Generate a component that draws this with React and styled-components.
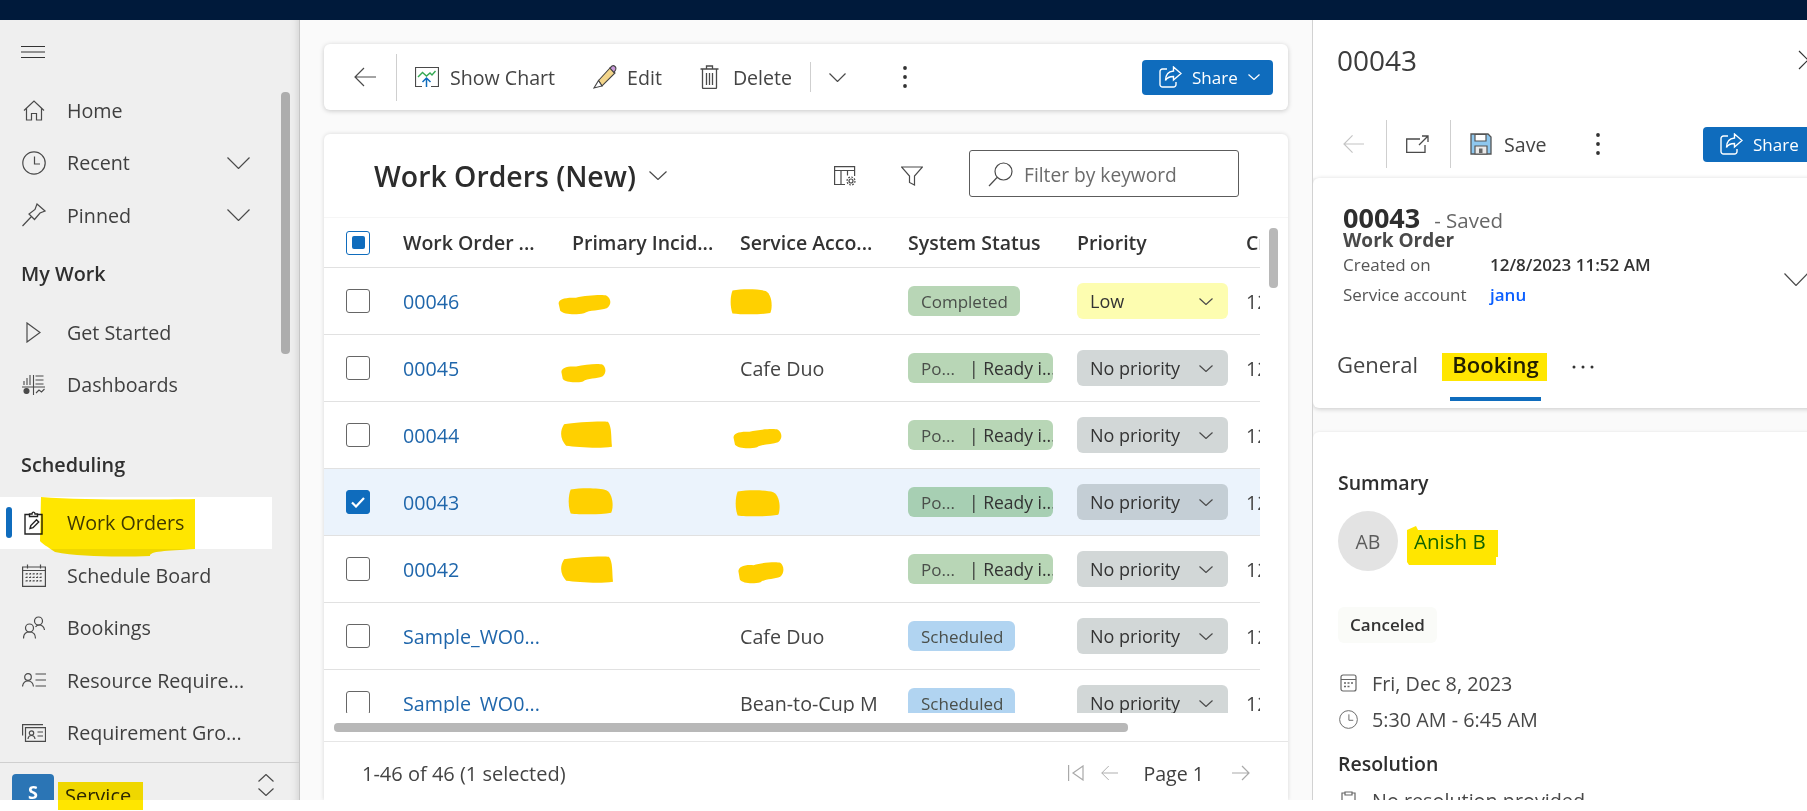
import React from "react";
import styled, { createGlobalStyle } from "styled-components";

const Global = createGlobalStyle`
  html, body { margin: 0; padding: 0; background: #fff; }
  body { font-family: "Open Sans", "Noto Sans", "Liberation Sans", sans-serif; color: #3b3a39; }
  * { box-sizing: border-box; }
`;

const Page = styled.div`
  position: relative;
  width: 1807px;
  height: 811px;
  background: #fff;
  overflow: hidden;
`;
const TopBar = styled.div`height: 20px; background: #001a3b;`;
const Shell = styled.div`display: flex; height: 780px;`;

/* highlighter strokes drawn by the screenshot's author */
const Marker = styled.svg`
  position: absolute;
  left: ${p => p.$x}px;
  top: ${p => p.$y}px;
  width: ${p => p.$w}px;
  height: ${p => p.$h}px;
  mix-blend-mode: multiply;
  pointer-events: none;
  z-index: 5;
`;
const Highlight = ({ x, y, w, h, d }) => (
  <Marker $x={x} $y={y} $w={w} $h={h} viewBox={`0 0 ${w} ${h}`}><path d={d} fill="#ffe600" /></Marker>
);

const Ico = styled.svg`
  flex: none;
  fill: none;
  stroke: ${p => p.$c || "#4a4a4a"};
  stroke-width: ${p => p.$sw || 1.2};
`;

/* ---------- sidebar ---------- */
const Sidebar = styled.aside`
  position: relative;
  flex: none;
  width: 300px;
  background: #efefef;
  border-right: 1px solid #c6c6c6;
  box-shadow: inset -10px 0 9px -9px rgba(0,0,0,.13);
  display: flex;
  flex-direction: column;
`;
const Burger = styled.div`
  height: 62px;
  flex: none;
  display: flex;
  align-items: flex-start;
  padding: 26px 0 0 21px;
`;
const Nav = styled.nav`flex: 1; min-height: 0; overflow: hidden; padding-top: 2px;`;
const NavItem = styled.div`
  position: relative;
  height: 52.5px;
  width: 272px;
  display: flex;
  align-items: center;
  font-size: 19.7px;
  color: #3f3f3f;
  background: ${p => p.$active ? "#fff" : "transparent"};
`;
const NavIcon = styled.span`
  width: 67px;
  flex: none;
  display: flex;
  justify-content: center;
`;
const NavLabel = styled.span`flex: 1; white-space: nowrap;`;
const NavChevron = styled.span`display: flex; padding-right: 22px;`;
const ActiveBar = styled.span`
  position: absolute;
  left: 6px;
  top: 10px;
  width: 6px;
  height: 31px;
  border-radius: 3px;
  background: #0f6cbd;
`;
const NavHeading = styled.div`
  height: 52.5px;
  margin-top: ${p => p.$mt}px;
  margin-bottom: 6px;
  padding-left: 21px;
  display: flex;
  align-items: center;
  font-size: 19.8px;
  font-weight: 600;
  color: #2f2f2f;
`;
const SideThumb = styled.div`
  position: absolute;
  left: 281px;
  top: 72px;
  width: 9px;
  height: 262px;
  border-radius: 4px;
  background: #adadad;
`;
const AreaSwitch = styled.div`
  flex: none;
  height: 38px;
  border-top: 1px solid #cfcfcf;
  overflow: hidden;
  display: flex;
  padding: 11px 0 0 12px;
  font-size: 20px;
  font-weight: 500;
  color: #2b2b2b;
`;
const AreaTile = styled.div`
  width: 42px;
  height: 42px;
  flex: none;
  background: #2b75b5;
  border-radius: 4px;
  color: #fff;
  font-weight: 700;
  font-size: 18px;
  text-align: center;
  line-height: 36px;
`;
const AreaName = styled.span`margin-left: 11px; line-height: 44px;`;
const AreaChevrons = styled.span`
  margin-left: auto;
  padding-right: 25px;
  display: flex;
  flex-direction: column;
  gap: 6px;
`;

/* ---------- main column ---------- */
const Main = styled.main`
  flex: none;
  width: 1012px;
  background: #fafafa;
  padding: 24px 24px 0 24px;
  display: flex;
  flex-direction: column;
  gap: 24px;
  overflow: hidden;
`;
const CommandBar = styled.div`
  flex: none;
  height: 66px;
  background: #fff;
  border-radius: 6px;
  box-shadow: 0 1px 5px rgba(0,0,0,.2);
  display: flex;
  align-items: center;
  padding: 0 15px 0 30px;
`;
const Sep = styled.span`
  flex: none;
  width: 1px;
  height: ${p => p.$h}px;
  margin-left: ${p => p.$ml}px;
  background: #cfcfcf;
`;
const Cmd = styled.div`
  flex: none;
  display: flex;
  align-items: center;
  gap: ${p => p.$gap ?? 11}px;
  margin-left: ${p => p.$ml || 0}px;
  font-size: 19.6px;
  color: #444;
  white-space: nowrap;
`;
const ShareBtn = styled.div`
  flex: none;
  display: flex;
  align-items: center;
  width: ${p => p.$w}px;
  height: 35px;
  margin-left: auto;
  padding-left: 17px;
  gap: 10px;
  background: #0f6cbd;
  border-radius: 4px;
  color: #fff;
  font-size: 17px;
`;
const GridCard = styled.section`
  position: relative;
  flex: 1;
  min-height: 0;
  background: #fff;
  border-radius: 6px 6px 0 0;
  box-shadow: 0 0 4px rgba(0,0,0,.14);
  display: flex;
  flex-direction: column;
`;
const TitleBar = styled.div`
  flex: none;
  height: 84px;
  display: flex;
  align-items: center;
  padding: 0 49px 0 50px;
  border-bottom: 1px solid #f6f6f6;
`;
const ViewTitle = styled.h1`
  margin: 0;
  font-size: 28.4px;
  font-weight: 600;
  color: #2c2c2c;
  white-space: nowrap;
`;
const TitleTools = styled.div`
  margin-left: auto;
  display: flex;
  align-items: center;
  gap: 45px;
`;
const Search = styled.div`
  width: 270px;
  height: 47px;
  margin-left: 1px;
  margin-top: -5px;
  border: 1px solid #5c5c5c;
  border-radius: 3px;
  display: flex;
  align-items: center;
  padding: 2px 0 0 18px;
  gap: 11px;
  font-size: 19.2px;
  color: #6b6b6b;
  white-space: nowrap;
`;
const Viewport = styled.div`width: 936px; overflow: hidden; flex: none;`;
const columns = "79px 169px 168px 168px 169px 169px 169px";
const HeadRow = styled.div`
  display: grid;
  grid-template-columns: ${columns};
  height: 50px;
  align-items: center;
  border-bottom: 1px solid #e1e1e1;
  font-size: 19.5px;
  font-weight: 600;
  color: #333;
  white-space: nowrap;
`;
const Body = styled.div`height: 445px; overflow: hidden;`;
const Row = styled.div`
  position: relative;
  display: grid;
  grid-template-columns: ${columns};
  height: 67px;
  align-items: center;
  border-bottom: 1px solid #e1e1e1;
  background: ${p => p.$sel ? "#ebf3fc" : "#fff"};
  font-size: 19.7px;
  color: #444;
  white-space: nowrap;
`;
const CheckCell = styled.div`padding-left: 22px; display: flex;`;
const Box = styled.span`
  width: 24px;
  height: 24px;
  border-radius: 3px;
  border: 1px solid ${p => p.$on ? "#0f6cbd" : "#666"};
  background: ${p => p.$fill ? "#0f6cbd" : "#fff"};
  display: flex;
  align-items: center;
  justify-content: center;
`;
const BoxDot = styled.span`width: 13px; height: 13px; border-radius: 2px; background: #0f6cbd;`;
const LinkCell = styled.span`color: #1f66ab;`;
const Pill = styled.span`
  display: inline-flex;
  align-items: center;
  height: 30px;
  padding: 0 0 0 13px;
  width: ${p => p.$w}px;
  border-radius: 6px;
  font-size: 17px;
  color: #4a4f4a;
  background: ${p => p.$bg};
  overflow: hidden;
`;
const PillHead = styled.span`width: 48px; flex: none;`;
const PillTail = styled.span`color: #333; font-weight: 500; font-size: 17.5px;`;
const PillCell = styled.div`display: flex;`;
const Priority = styled.div`
  width: 151px;
  height: 36px;
  border-radius: 6px;
  background: ${p => p.$bg};
  display: flex;
  align-items: center;
  justify-content: space-between;
  padding: 0 15px 0 13px;
  font-size: 18px;
  font-weight: 500;
  color: #333;
`;
const Blob = styled.svg`
  position: absolute;
  left: ${p => p.$x}px;
  top: ${p => p.$y}px;
  width: ${p => p.$w}px;
  height: ${p => p.$h}px;
  fill: #ffd000;
`;
const VThumb = styled.div`
  position: absolute;
  left: 945px;
  top: 94px;
  width: 9px;
  height: 60px;
  border-radius: 4px;
  background: #b8b8b8;
`;
const HTrack = styled.div`flex: none; height: 28px; padding: 10px 0 0 10px;`;
const HThumb = styled.div`width: 794px; height: 9px; border-radius: 4px; background: #b8b8b8;`;
const Footer = styled.div`
  flex: 1;
  border-top: 1px solid #e6e6e6;
  display: flex;
  align-items: center;
  padding: 4px 38px 0 38px;
  font-size: 20px;
  color: #444;
`;
const Pager = styled.div`margin-left: auto; display: flex; align-items: center;`;
const PageLabel = styled.span`margin: 0 28px 0 25px; font-size: 19.6px; color: #3f3f3f;`;

/* ---------- side panel ---------- */
const Panel = styled.aside`
  flex: 1;
  min-width: 0;
  overflow: hidden;
  background: #fafafa;
  border-left: 1px solid #d2d2d2;
`;
const PanelInner = styled.div`width: 530px;`;
const PanelHead = styled.div`
  height: 80px;
  background: #fff;
  display: flex;
  align-items: center;
  justify-content: space-between;
  padding: 0 25px 0 24px;
  font-size: 28px;
  color: #3c3c3c;
`;
const PanelTools = styled.div`
  height: 78px;
  background: #fff;
  padding: 20px 9px 10px 30px;
  display: flex;
  align-items: center;
`;
const SummaryCard = styled.div`
  height: 230px;
  background: #fff;
  border-radius: 6px 0 0 6px;
  box-shadow: 0 1px 5px rgba(0,0,0,.2);
  padding: 25px 0 0 30px;
  position: relative;
`;
const RecordLine = styled.div`
  display: flex;
  align-items: baseline;
  height: 30px;
  line-height: 30px;
`;
const RecordNo = styled.span`font-size: 27px; font-weight: 700; color: #2e2e2e;`;
const RecordState = styled.span`margin-left: 14px; font-size: 20.5px; color: #666;`;
const RecordType = styled.div`
  font-size: 19px;
  font-weight: 700;
  color: #4a4a4a;
  line-height: 22px;
  margin-top: -4px;
`;
const Field = styled.div`
  display: flex;
  height: 30px;
  align-items: center;
  font-size: 17px;
  color: #555;
  position: relative;
  top: -2px;
`;
const FieldName = styled.span`width: 147px; flex: none;`;
const FieldValue = styled.span`font-weight: 600; color: ${p => p.$link ? "#0b5fff" : "#333"};`;
const CardChevron = styled.span`position: absolute; left: 471px; top: 91px;`;
const Tabs = styled.div`
  display: flex;
  align-items: flex-start;
  height: 60px;
  margin: 30px 0 0 -6px;
  font-size: 22px;
  color: #444;
`;
const Tab = styled.div`
  position: relative;
  height: 60px;
  padding-top: 8px;
  margin-left: ${p => p.$ml || 0}px;
  width: ${p => p.$w}px;
  text-align: center;
  white-space: nowrap;
  border-bottom: ${p => p.$on ? "4px solid #0f6cbd" : "none"};
  font-weight: ${p => p.$on ? 600 : 400};
  color: ${p => p.$on ? "#222" : "#444"};
`;
const MoreDots = styled.span`margin: 24px 0 0 31px; display: flex;`;
const BookingCard = styled.div`
  position: relative;
  margin-top: 24px;
  height: 368px;
  background: #fff;
  border-radius: 6px 0 0 0;
  box-shadow: 0 0 3px rgba(0,0,0,.1);
  padding: 37px 0 0 25px;
`;
const SectionTitle = styled.div`
  font-size: 19.5px;
  font-weight: 600;
  color: #2e2e2e;
  line-height: 28px;
  margin-top: ${p => p.$mt || 0}px;
`;
const Person = styled.div`display: flex; align-items: center; gap: 16px; margin-top: 14px;`;
const Avatar = styled.div`
  width: 60px;
  height: 60px;
  border-radius: 50%;
  background: #e3e3e3;
  color: #5c5c5c;
  font-size: 19.500px;
  font-weight: 500;
  display: flex;
  align-items: center;
  justify-content: center;
`;
const PersonName = styled.span`font-size: 20.5px; color: #0f6cbd;`;
const StatusTag = styled.div`
  display: inline-block;
  margin-top: 36px;
  height: 36px;
  padding: 0 12px;
  line-height: 35px;
  border-radius: 6px;
  background: #fafbf8;
  font-size: 17px;
  font-weight: 600;
  color: #333;
`;
const InfoRow = styled.div`
  display: flex;
  align-items: center;
  height: 36px;
  gap: 14px;
  font-size: 19.800px;
  color: #484848;
  margin-top: ${p => p.$mt || 0}px;
`;
const InfoIcon = styled.span`width: 20px; display: flex; justify-content: center; flex: none;`;

/* ---------- icons ---------- */
const Chevron = ({ w = 23, h = 12, c = "#4a4a4a", sw = 1.2, up }) => (
  <Ico $c={c} $sw={sw} width={w} height={h} viewBox={`0 0 ${w} ${h}`}>
    <path d={up ? `M.5 ${h - .5}L${w / 2} .5L${w - .5} ${h - .5}` : `M.5 .5L${w / 2} ${h - .5}L${w - .5} .5`} />
  </Ico>
);
const ArrowLeft = ({ c = "#4a4a4a", w = 22 }) => (
  <Ico $c={c} width={w} height="20" viewBox="0 0 22 20"><path d="M22 10H1M10 1L1 10l9 9" /></Ico>
);
const ArrowRight = ({ c }) => (
  <Ico $c={c} width="18" height="16" viewBox="0 0 18 16"><path d="M0 8h17M10 1l7 7-7 7" /></Ico>
);
const Dots = ({ c = "#333" }) => (
  <svg width="4" height="22" viewBox="0 0 4 22" fill={c}><circle cx="2" cy="2" r="1.9" /><circle cx="2" cy="11" r="1.9" /><circle cx="2" cy="20" r="1.9" /></svg>
);
const HomeI = () => <Ico width="22" height="21" viewBox="0 0 22 21"><path d="M1 10.5L11 1l10 9.5M3.5 8.5V20H8.5V13.5H13.5V20H18.5V8.5" /></Ico>;
const ClockI = ({ s = 24, c }) => <Ico $c={c} width={s} height={s} viewBox="0 0 24 24"><circle cx="12" cy="12" r="11.2" /><path d="M12.5 5.5V13H18" /></Ico>;
const PinI = () => <Ico width="24" height="24" viewBox="0 0 24 24"><path d="M15 1l8 7-5 2-5.5 6.5L7 11l6-4.5zM9.5 13.5L.5 23" /></Ico>;
const PlayI = () => <Ico width="15" height="21" viewBox="0 0 15 21"><path d="M1 1l13 9.5L1 20z" /></Ico>;
const DashI = () => (
  <Ico width="23" height="22" viewBox="0 0 23 22" $sw={1.1}>
    <path d="M0 13h23M11.5 1v20M13.5 2h8M13.5 6h8M13.5 10h8M2 11V7M5 11V4M8 11V1M14 19l3-3 2.5 2 3-3" />
    <circle cx="4.5" cy="17" r="2.5" fill="#4a4a4a" />
  </Ico>
);
const WorkOrderI = () => (
  <Ico width="19" height="24" viewBox="0 0 19 24" $c="#222" $sw={1.4}>
    <path d="M5.5 3.5H1V23H18V3.5H13.5M5.5 5.5V3H8C8 .5 11 .5 11 3H13.5V5.5Z" />
    <path d="M6 17.5l.8-3 5.7-5.7 2.2 2.2-5.7 5.7z" />
  </Ico>
);
const CalI = () => (
  <Ico width="24" height="23" viewBox="0 0 24 23">
    <path d="M.6 3h22.8v19.4H.6zM.6 6.5h22.8M5.5 .5v4M18.5 .5v4" />
    <path d="M3.5 10h17M3.5 13.5h17M3.5 17h17M5 9v10M8.5 9v10M12 9v10M15.5 9v10M19 9v10" strokeDasharray="1.4 2.1" />
  </Ico>
);
const PeopleI = () => (
  <Ico width="22" height="23" viewBox="0 0 22 23">
    <circle cx="15.5" cy="5" r="4" /><circle cx="6.5" cy="12" r="4" />
    <path d="M.5 22.5c0-4.5 2.5-6.5 6-6.5s6 2 6 6.5M12.5 11c1-1.5 2-2 3.5-2 3 0 5 2 5.5 5" />
  </Ico>
);
const ResourceI = () => (
  <Ico width="24" height="14" viewBox="0 0 24 14">
    <circle cx="6" cy="4" r="3.3" /><path d="M.5 13.5c.5-3.5 2.5-5.5 5.5-5.5s5 2 5.5 5.5M13.5 1H24M13.5 7H24M13.5 13H24" />
  </Ico>
);
const GroupI = () => (
  <Ico width="24" height="18" viewBox="0 0 24 18">
    <path d="M.6 11.5V.6H21M3.5 3.6h20V17.4h-20z" /><circle cx="9.5" cy="9" r="2.2" />
    <path d="M6 15c.3-2.5 1.5-3.5 3.5-3.5S12.700 12.500 13 15M15.500 8H21M15.500 12H21" />
  </Ico>
);
const ChartI = () => (
  <svg width="24" height="20" viewBox="0 0 24 20" fill="none">
    <path d="M7 19.500H.5V.5h23v19H16" stroke="#4a4a4a" strokeWidth="1.200" />
    <path d="M3 10l4.500-4.500 4 3.500 3.500-3 2 2 3.500-4" stroke="#35a853" strokeWidth="1.400" />
    <path d="M11.500 21V11M7.500 15l4-4 4 4" stroke="#0f6cbd" strokeWidth="1.500" />
  </svg>
);
const PencilI = () => (
  <svg width="24" height="24" viewBox="0 0 24 24" fill="none">
    <path d="M5.500 15.500L17 3l5 5L9 21z" fill="#f3d58a" stroke="#444" strokeWidth="1.100" />
    <path d="M17 3l2-2c1-.5 2-.5 3 .5s1 2.500.5 3.500l-1.500 2.500z" fill="#c99adb" stroke="#444" strokeWidth="1.100" />
    <path d="M5.500 15.500L1 23l8-2z" fill="#fff" stroke="#444" strokeWidth="1.100" />
  </svg>
);
const TrashI = () => (
  <Ico width="19" height="24" viewBox="0 0 19 24" $sw={1.300}>
    <path d="M.5 4h18M2.500 4v18.500c0 .5.5 1 1 1h12c.5 0 1-.5 1-1V4M6.500 4V1h6v3M6.500 8v12M9.500 8v12M12.500 8v12" />
  </Ico>
);
const ShareI = () => (
  <Ico $c="#fff" $sw={1.400} width="23" height="22" viewBox="0 0 23 22">
    <path d="M8 3H3.500A2.500 2.500 0 0 0 1 5.500v13A2.500 2.500 0 0 0 3.500 21h11a2.500 2.500 0 0 0 2.500-2.500V16" />
    <path d="M14.500 1l7.500 6.500-7.500 6.500v-3.500c-4 0-6.500 1-8 4 0-5 2.500-9 8-9.500z" />
  </Ico>
);
const TableI = () => (
  <Ico width="22" height="20" viewBox="0 0 22 20">
    <path d="M11 18.500H.6V.6h20v9.500M.6 4.500h20M7 4.500v14M13.500 4.500v5" />
    <circle cx="17" cy="15" r="2" /><circle cx="17" cy="15" r="4" strokeDasharray="1.800 1.300" />
  </Ico>
);
const FilterI = () => <Ico width="22" height="20" viewBox="0 0 22 20"><path d="M.5 1h21l-8 9v9l-5-2.500V10z" /></Ico>;
const SearchI = () => <Ico width="25" height="25" viewBox="0 0 25 25"><circle cx="15.500" cy="9.500" r="8.500" /><path d="M9 15.500L1 24" /></Ico>;
const CheckI = () => <Ico $c="#fff" $sw={2.200} width="14" height="11" viewBox="0 0 14 11"><path d="M1 5.500L5 9.500 13 1" /></Ico>;
const FirstI = () => <Ico $c="#a9a9a9" width="16" height="16" viewBox="0 0 16 16"><path d="M.6 0v16M15 1L5 8l10 7z" /></Ico>;
const PopI = () => <Ico width="23" height="18" viewBox="0 0 23 18" $sw={1.300}><path d="M14 4H.7v13.300H19V10M13 10L22 1M16 1h6v6" /></Ico>;
const SaveI = () => (
  <svg width="22" height="22" viewBox="0 0 22 22">
    <path d="M1 1h17l3 3v17H1z" fill="#8ec7ee" stroke="#555" strokeWidth="1.300" />
    <path d="M5 1.500h11V8H5z" fill="#fff" stroke="#555" strokeWidth="1.200" />
    <path d="M5 13h12v8H5z" fill="#eaeaea" stroke="#555" strokeWidth="1.200" />
    <path d="M9 15.500h3.500V20H9z" fill="#666" />
  </svg>
);
const XI = () => <Ico $c="#333" width="20" height="20" viewBox="0 0 20 20"><path d="M1 1l18 18M19 1L1 19" /></Ico>;
const SmallCal = () => (
  <Ico $c="#666" width="17" height="18" viewBox="0 0 17 18" $sw={1.200}>
    <path d="M1 3a2 2 0 0 1 2-2h11a2 2 0 0 1 2 2v12a2 2 0 0 1-2 2H3a2 2 0 0 1-2-2zM1 5.500h15" />
    <path d="M4 9h2M7.500 9h2M11 9h2M4 12.500h2M7.500 12.500h2" strokeWidth="1.600" />
  </Ico>
);
const ClipI = () => <Ico $c="#666" width="15" height="18" viewBox="0 0 15 18"><path d="M4 2H1v15h13V2h-3M4 1h7v3H4z" /></Ico>;

const blobA = "M3 45C3 25 15 15 35 18C55 6 85 2 92 8C100 20 102 50 92 68C80 80 60 75 50 92C35 100 12 98 6 80Z";
const blobB = "M6 12C25 6 75 0 92 3C100 20 98 60 100 92C70 100 30 92 10 88C0 70-4 40 6 12Z";
const blobC = "M6 6C30-2 70 0 85 8C100 20 102 70 96 92C70 100 25 98 6 94C0 70 0 30 6 6Z";
const Redact = ({ x, y, w, h, d }) => (
  <Blob $x={x} $y={y} $w={w} $h={h} viewBox="0 0 100 100" preserveAspectRatio="none"><path d={d} /></Blob>
);

const green = "#b8d6b6", blue = "#b1d4f1";
const rows = [
  { id: "00046", blobs: [[233, 26, 54, 21, blobA], [406, 21, 42, 26, blobC]], st: "done", pr: "Low" },
  { id: "00045", blobs: [[236, 28, 46, 20, blobA]], acc: "Cafe Duo", st: "po", pr: "No priority" },
  { id: "00044", blobs: [[237, 19, 51, 28, blobB], [408, 26, 50, 21, blobA]], st: "po", pr: "No priority" },
  { id: "00043", sel: true, blobs: [[244, 19, 45, 27, blobC], [411, 21, 45, 27, blobC]], st: "po", pr: "No priority" },
  { id: "00042", blobs: [[237, 20, 52, 28, blobB], [413, 25, 47, 23, blobA]], st: "po", pr: "No priority" },
  { id: "Sample_WO0...", acc: "Cafe Duo", st: "sch", pr: "No priority" },
  { id: "Sample_WO0...", acc: "Bean-to-Cup M", st: "sch", pr: "No priority" },
];

const StatusPill = ({ st, sel }) => {
  if (st === "done") return <Pill $w={112} $bg={green}>Completed</Pill>;
  if (st === "sch") return <Pill $w={107} $bg={blue}>Scheduled</Pill>;
  return <Pill $w={145} $bg={sel ? "#a7cfb3" : green}><PillHead>Po...</PillHead><PillTail>| Ready i...</PillTail></Pill>;
};

const NavEntry = ({ icon, label, chevron, active }) => (
  <NavItem $active={active}>
    {active && <ActiveBar />}
    <NavIcon>{icon}</NavIcon>
    <NavLabel>{label}</NavLabel>
    {chevron && <NavChevron><Chevron /></NavChevron>}
  </NavItem>
);

export default function App() {
  return (
    <Page>
      <Global />
      <TopBar />
      <Shell>
        <Sidebar>
          <Burger>
            <Ico $c="#333" $sw={1} width="24" height="12" viewBox="0 0 24 12"><path d="M0 .5h24M0 6h24M0 11.500h24" /></Ico>
          </Burger>
          <Nav>
            <NavEntry icon={<HomeI />} label="Home" />
            <NavEntry icon={<ClockI />} label="Recent" chevron />
            <NavEntry icon={<PinI />} label="Pinned" chevron />
            <NavHeading $mt={6}>My Work</NavHeading>
            <NavEntry icon={<PlayI />} label="Get Started" />
            <NavEntry icon={<DashI />} label="Dashboards" />
            <NavHeading $mt={27}>Scheduling</NavHeading>
            <NavEntry icon={<WorkOrderI />} label="Work Orders" active />
            <NavEntry icon={<CalI />} label="Schedule Board" />
            <NavEntry icon={<PeopleI />} label="Bookings" />
            <NavEntry icon={<ResourceI />} label="Resource Require..." />
            <NavEntry icon={<GroupI />} label="Requirement Gro..." />
          </Nav>
          <SideThumb />
          <AreaSwitch>
            <AreaTile>S</AreaTile>
            <AreaName>Service</AreaName>
            <AreaChevrons>
              <Chevron up w={16} h={8} />
              <Chevron w={16} h={8} />
            </AreaChevrons>
          </AreaSwitch>
          <Highlight x={40} y={477} w={156} h={61} d="M1 0C40 3 110 3 155 2L155 52C125 54 110 54 110 59C80 60 40 60 15 55C8 50 1 46 0 44Z" />
          <Highlight x={58} y={762} w={85} h={28} d="M0 0H85V28H0Z" />
        </Sidebar>

        <Main>
          <CommandBar>
            <ArrowLeft />
            <Sep $h={47} $ml={20} />
            <Cmd $ml={18}><ChartI />Show Chart</Cmd>
            <Cmd $ml={38} $gap={10}><PencilI />Edit</Cmd>
            <Cmd $ml={38} $gap={14}><TrashI />Delete</Cmd>
            <Sep $h={30} $ml={18} />
            <Cmd $ml={18}><Chevron w={17} h={9} /></Cmd>
            <Cmd $ml={57}><Dots /></Cmd>
            <ShareBtn $w={131}><ShareI />Share<Chevron w={12} h={6} c="#fff" /></ShareBtn>
          </CommandBar>

          <GridCard>
            <TitleBar>
              <ViewTitle>Work Orders (New)</ViewTitle>
              <Cmd $ml={13}><Chevron w={18} h={9} /></Cmd>
              <TitleTools>
                <TableI />
                <FilterI />
                <Search><SearchI />Filter by keyword</Search>
              </TitleTools>
            </TitleBar>
            <Viewport>
              <HeadRow>
                <CheckCell><Box $on><BoxDot /></Box></CheckCell>
                <span>Work Order ...</span>
                <span>Primary Incid...</span>
                <span>Service Acco...</span>
                <span>System Status</span>
                <span>Priority</span>
                <span>Created On</span>
              </HeadRow>
              <Body>
                {rows.map((r, i) => (
                  <Row key={i} $sel={r.sel}>
                    <CheckCell>{r.sel ? <Box $on $fill><CheckI /></Box> : <Box />}</CheckCell>
                    <LinkCell>{r.id}</LinkCell>
                    <span />
                    <span>{r.acc}</span>
                    <PillCell><StatusPill st={r.st} sel={r.sel} /></PillCell>
                    <Priority $bg={r.pr === "Low" ? "#fdfdb0" : r.sel ? "#c4ced5" : "#d2d7d7"}>
                      {r.pr}<Chevron w={14} h={7} />
                    </Priority>
                    <span>12/8/2023 11:52 AM</span>
                    {(r.blobs || []).map(([x, y, w, h, d], k) => <Redact key={k} x={x} y={y} w={w} h={h} d={d} />)}
                  </Row>
                ))}
              </Body>
            </Viewport>
            <VThumb />
            <HTrack><HThumb /></HTrack>
            <Footer>
              1-46 of 46 (1 selected)
              <Pager>
                <FirstI />
                <Cmd $ml={17}><ArrowLeft c="#a9a9a9" w={17} /></Cmd>
                <PageLabel>Page 1</PageLabel>
                <ArrowRight c="#a9a9a9" />
              </Pager>
            </Footer>
          </GridCard>
        </Main>

        <Panel>
          <PanelInner>
            <PanelHead>00043<XI /></PanelHead>
            <PanelTools>
              <ArrowLeft c="#c4c4c4" w={21} />
              <Sep $h={48} $ml={22} />
              <Cmd $ml={19}><PopI /></Cmd>
              <Sep $h={48} $ml={21} />
              <Cmd $ml={19} $gap={12}><SaveI />Save</Cmd>
              <Cmd $ml={50}><Dots /></Cmd>
              <ShareBtn $w={131}><ShareI />Share<Chevron w={12} h={6} c="#fff" /></ShareBtn>
            </PanelTools>
            <SummaryCard>
              <RecordLine><RecordNo>00043</RecordNo><RecordState>- Saved</RecordState></RecordLine>
              <RecordType>Work Order</RecordType>
              <Field><FieldName>Created on</FieldName><FieldValue>12/8/2023 11:52 AM</FieldValue></Field>
              <Field><FieldName>Service account</FieldName><FieldValue $link>janu</FieldValue></Field>
              <CardChevron><Chevron w={24} h={13} /></CardChevron>
              <Tabs>
                <Tab $w={80}>General</Tab>
                <Tab $on $ml={33} $w={91}>
                  Booking
                  <Highlight x={-8} y={12} w={105} h={28} d="M0 0H105V28H0Z" />
                </Tab>
                <MoreDots>
                  <svg width="22" height="4" viewBox="0 0 22 4" fill="#333"><circle cx="2" cy="2" r="1.500" /><circle cx="11" cy="2" r="1.500" /><circle cx="20" cy="2" r="1.500" /></svg>
                </MoreDots>
              </Tabs>
            </SummaryCard>
            <BookingCard>
              <SectionTitle>Summary</SectionTitle>
              <Person>
                <Avatar>AB</Avatar>
                <PersonName>Anish B</PersonName>
              </Person>
              <Highlight x={94} y={94} w={91} h={39} d="M0 4L9 0L11 4H91V31H89V39H2L0 36Z" />
              <StatusTag>Canceled</StatusTag>
              <InfoRow $mt={22}><InfoIcon><SmallCal /></InfoIcon>Fri, Dec 8, 2023</InfoRow>
              <InfoRow><InfoIcon><ClockI s={19} c="#666" /></InfoIcon>5:30 AM - 6:45 AM</InfoRow>
              <SectionTitle $mt={13}>Resolution</SectionTitle>
              <InfoRow $mt={4}><InfoIcon><ClipI /></InfoIcon>No resolution provided</InfoRow>
            </BookingCard>
          </PanelInner>
        </Panel>
      </Shell>
    </Page>
  );
}
